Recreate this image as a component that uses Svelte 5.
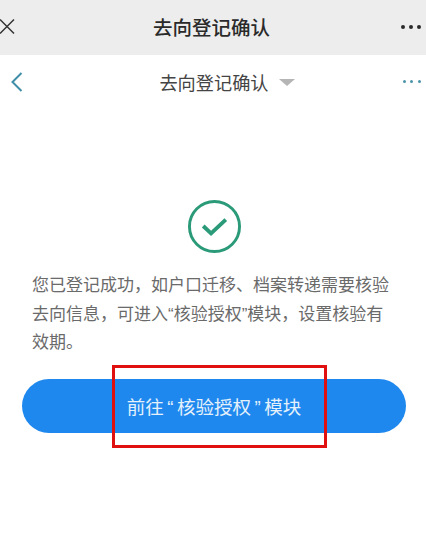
<script>
	const title = '去向登记确认';
</script>

<div class="page">
	<header class="wx-bar">
		<svg class="close" width="18" height="18" viewBox="0 0 18 18" aria-hidden="true">
			<path d="M1 1.5 L15 15.5 M15 1.5 L1 15.5" fill="none" stroke="#333" stroke-width="1.5" />
		</svg>
		<span class="wx-title">{title}</span>
		<span class="dots dark"><i></i><i></i><i></i></span>
	</header>

	<nav class="app-bar">
		<svg class="back" width="14" height="22" viewBox="0 0 14 22" aria-hidden="true">
			<path d="M11.5 2 L2.5 11 L11.5 20" fill="none" stroke="#3f8fa8" stroke-width="2" />
		</svg>
		<span class="app-title">{title}<b class="caret"></b></span>
		<span class="dots teal"><i></i><i></i><i></i></span>
	</nav>

	<main class="content">
		<svg class="ok" width="55" height="55" viewBox="0 0 56 56" aria-hidden="true">
			<circle cx="28" cy="28" r="25.5" fill="none" stroke="#2b9a78" stroke-width="3" />
			<path d="M16.500 27.500 L24.500 35 L39.500 21" fill="none" stroke="#2b9a78" stroke-width="4" />
		</svg>
		<p class="msg">您已登记成功，如户口迁移、档案转递需要核验去向信息，可进入“核验授权”模块，设置核验有效期。</p>
		<div class="action">
			<button class="go">前往<span class="q">“</span>核验授权<span class="q">”</span>模块</button>
			<div class="highlight"></div>
		</div>
	</main>
</div>

<style>
	:global(body) {
		background: #fff;
	}

	.page {
		width: 426px;
		height: 544px;
		overflow: hidden;
		font-family: "Liberation Sans", "Noto Sans CJK SC", sans-serif;
	}

	.wx-bar {
		height: 55px;
		background: #ededed;
		display: flex;
		align-items: center;
		justify-content: space-between;
		padding: 0 5px 2px 0;
		box-sizing: border-box;
	}

	.close {
		margin-left: -1px;
	}

	.wx-title {
		font-size: 19.5px;
		font-weight: 500;
		color: #2a2a2a;
		margin-left: 5px;
	}

	.dots {
		display: flex;
		gap: 4px;
		width: 20px;
	}

	.dots i {
		width: 4px;
		height: 4px;
		border-radius: 50%;
	}

	.dark i {
		background: #2a2a2a;
	}

	.teal {
		width: 18px;
		gap: 4.5px;
	}

	.teal i {
		width: 3px;
		height: 3px;
		background: #4a94ab;
	}

	.app-bar {
		height: 55px;
		display: flex;
		align-items: center;
		justify-content: space-between;
		padding: 0 5px 2px 10px;
		box-sizing: border-box;
	}

	.app-title {
		display: flex;
		align-items: center;
		font-size: 18.2px;
		color: #444;
		margin-left: 27px;
	}

	.caret {
		width: 0;
		height: 0;
		margin-left: 10px;
		margin-top: 2px;
		border-left: 8px solid transparent;
		border-right: 8px solid transparent;
		border-top: 7px solid #b5b5b5;
	}

	.content {
		display: flex;
		flex-direction: column;
		align-items: center;
		padding: 89px 20px 0 22px;
	}

	.msg {
		width: 362px;
		margin: 18px 0 0 10px;
		font-size: 17px;
		line-height: 28.500px;
		color: #6a6a6a;
		align-self: flex-start;
	}

	.action {
		position: relative;
		width: 100%;
		margin-top: 21px;
	}

	.go {
		display: block;
		width: 100%;
		height: 54px;
		border: none;
		border-radius: 27px;
		background: #1f88ee;
		color: #e4f1fb;
		font-family: inherit;
		font-size: 18.5px;
		padding: 0;
	}

	.q {
		margin: 0 3.500px;
	}

	.highlight {
		position: absolute;
		left: 90px;
		top: -14px;
		width: 215px;
		height: 83px;
		border: 3px solid #e01010;
		box-sizing: border-box;
	}
</style>
